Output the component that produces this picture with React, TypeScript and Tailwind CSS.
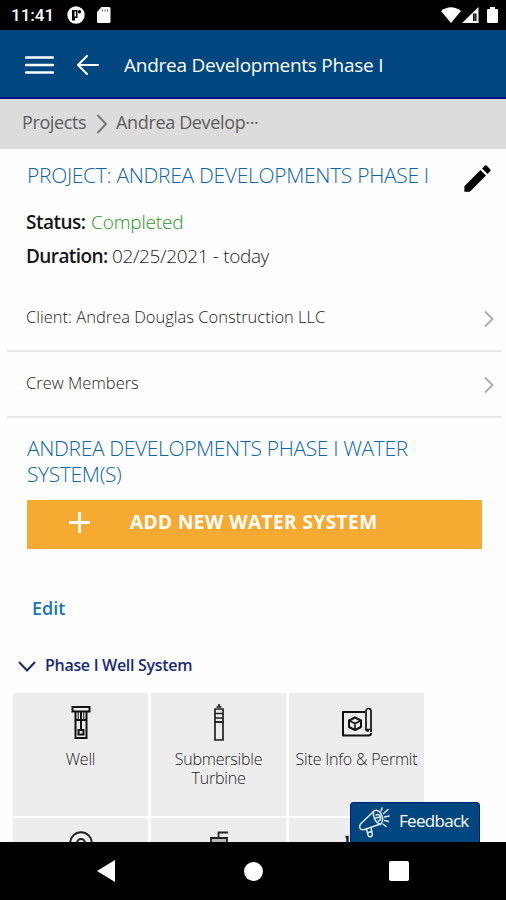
import React from 'react';
import { MdEdit } from 'react-icons/md';

const WellIcon = () => (
  <svg width="20" height="34" viewBox="0 0 20 34" fill="none" stroke="#111" strokeWidth="2">
    <path d="M1.5 2h17v4.5h-17z" />
    <path d="M4.5 6.5V33h11V6.5M10 6.5V25M4.5 15h11" />
    <path d="M7.5 25h5v4.5h-5z" />
    <path d="M7.200 7v8M12.800 7v8" strokeWidth="1" />
  </svg>
);

const TurbineIcon = () => (
  <svg width="12" height="38" viewBox="0 0 12 38" fill="none" stroke="#222" strokeWidth="1.7">
    <path d="M6 0v3M3.500 3h5M2 5h8v4.500H2z" />
    <path d="M2 9.500v4.500h8V9.500M2 14h8v4H2z" />
    <path d="M2 18h8v18H2z" />
  </svg>
);

const PermitIcon = () => (
  <svg width="32" height="30" viewBox="0 0 32 30" fill="none" stroke="#111" strokeWidth="2" strokeLinejoin="round">
    <path d="M24 5H2v23.5h25.500a2.700 2.700 0 0 0 2.700-2.700" />
    <path d="M25 22.500V4a2.500 2.500 0 0 1 5 0v21M25 22.500h5M25 22.500c0 1.500 2 1.500 3 1.500" strokeWidth="1.700" />
    <path d="M14 10.500l6 3v6.500l-6 3-6-3v-6.500z" strokeWidth="2" />
    <path d="M8 13.500l6 3 6-3M14 16.500v6" strokeWidth="1.500" />
  </svg>
);

const ReelIcon = () => (
  <svg width="24" height="24" viewBox="0 0 24 24" fill="none" stroke="#222" strokeWidth="2">
    <circle cx="12" cy="12" r="10.800" />
    <circle cx="12" cy="12" r="4" />
  </svg>
);

const TankIcon = () => (
  <svg width="20" height="26" viewBox="0 0 20 26" fill="none" stroke="#222" strokeWidth="1.8">
    <path d="M19 1.500H9.500V7" />
    <path d="M2 7h16v18H2z" fill="#bbb" />
  </svg>
);

const PumpIcon = () => (
  <svg width="32" height="26" viewBox="0 0 32 26" fill="none" stroke="#222" strokeWidth="2.500">
    <path d="M6.500 5v20M4.500 6h3" />
  </svg>
);

const MegaphoneIcon = () => (
  <svg width="32" height="32" viewBox="0 0 32 32" fill="none" stroke="#dfe9f7" strokeWidth="1.500" strokeLinecap="round" strokeLinejoin="round">
    <path d="M2.500 17L14.500 5.500c2-3 5.500-3 8 .5 2.500 4 3 8.500 0 11l-16 5.500C2 24 .5 20 2.500 17z" />
    <path d="M8.500 22l1.500 6c.8 3 5 2 4.200-1L13 20.500M10 25.500l4-1" />
    <path d="M15.500 5c-1 4 1.500 10.500 7 12.500M18 8c2-1 4 0 4.500 2s-.5 3.500-2 4M17.500 11l4-1" />
    <path d="M23 4l1-3M25.500 6.500l4.500-4M26.500 10l4.500-1M26.500 13.500l4 1M25 17l3 2.500" />
  </svg>
);

const rows = ['Client: Andrea Douglas Construction LLC', 'Crew Members'];

const tiles = [
  { icon: <WellIcon />, label: 'Well', pad: 'pt-3' },
  { icon: <TurbineIcon />, label: 'Submersible Turbine', pad: 'pt-[11px]' },
  { icon: <PermitIcon />, label: 'Site Info & Permit', pad: 'pt-[14px]' },
  { icon: <ReelIcon />, label: '', pad: 'pt-[13px]' },
  { icon: <TankIcon />, label: '', pad: 'pt-[13px]' },
  { icon: <PumpIcon />, label: '', pad: 'pt-[13px]' }
];

const Chevron = () => (
  <svg width="10" height="18" viewBox="0 0 10 18" fill="none" stroke="#aaa" strokeWidth="1.800">
    <path d="M1 1.500L8.500 9 1 16.500" />
  </svg>
);

function StatusBar() {
  return (
    <div className="flex h-[30px] shrink-0 items-center bg-black pl-[11px] pr-2 text-white">
      <span className="w-[56px] pt-0.5 font-['Roboto'] text-[17px] font-medium">11:41</span>
      <svg width="18" height="18" viewBox="0 0 18 18">
        <circle cx="9" cy="9" r="8.700" fill="#fff" />
        <path d="M5 4h5.500v8H8v2.500H5z" fill="#000" />
        <path d="M7.500 5.500h1.500v5H7.500z" fill="#fff" />
        <circle cx="12.500" cy="5.800" r="1.700" fill="#000" />
      </svg>
      <svg className="ml-3" width="14" height="16" viewBox="0 0 14 16">
        <path d="M4.500 0H12a1.500 1.500 0 0 1 1.500 1.500v13A1.500 1.500 0 0 1 12 16H1.500A1.500 1.500 0 0 1 0 14.500V5z" fill="#fff" />
        <path d="M5.500 2.500v2M8 2.500v2M10.500 2.500v2" stroke="#555" />
      </svg>
      <svg className="ml-auto" width="20" height="16" viewBox="0 0 20 16">
        <path d="M0 4Q10-3.500 20 4L10 16z" fill="#fff" />
      </svg>
      <svg className="ml-px" width="17" height="16" viewBox="0 0 17 16">
        <path d="M16.500 0v16H0z" fill="#fff" />
        <path d="M11 6.500h3.500V14H11z" fill="#000" />
        <path d="M12.300 6.500h1V14h-1z" fill="#777" />
      </svg>
      <svg className="ml-2" width="11" height="16" viewBox="0 0 11 16">
        <path d="M3 0h5v2h2a1 1 0 0 1 1 1v12a1 1 0 0 1-1 1H1a1 1 0 0 1-1-1V3a1 1 0 0 1 1-1h2z" fill="#fff" />
      </svg>
    </div>
  );
}

function Header() {
  return (
    <header className="flex h-[69px] shrink-0 items-center border-b-2 border-[#04107c] bg-[#00467f] pl-[25px] pt-0.5 text-white">
      <svg width="29" height="20" viewBox="0 0 29 20" stroke="#fff" strokeWidth="2.400" strokeLinecap="round">
        <path d="M1 2.500h27M1 10h27M1 17.500h27" />
      </svg>
      <svg className="ml-[22px]" width="24" height="20" viewBox="0 0 24 20" fill="none" stroke="#fff" strokeWidth="2" strokeLinecap="round" strokeLinejoin="round">
        <path d="M11 1L2 10l9 9M2 10h20" />
      </svg>
      <h1 className="ml-6 mt-0.5 whitespace-nowrap text-[19px] tracking-[-0.25px]">Andrea Developments Phase I</h1>
    </header>
  );
}

export default function App() {
  return (
    <div className="flex h-[900px] w-[506px] flex-col overflow-hidden bg-white font-['Open_Sans',sans-serif]">
      <StatusBar />
      <Header />

      <nav className="flex h-[50px] shrink-0 items-center bg-[#dcdcdc] pl-[22px] text-[18px] text-[#5c5c5c]">
        <span className="mb-1 w-[74px] whitespace-nowrap tracking-[-0.4px]">Projects</span>
        <svg width="12" height="20" viewBox="0 0 12 20" fill="none" stroke="#777" strokeWidth="2">
          <path d="M1.500 1L10 10l-8.500 9" />
        </svg>
        <span className="mb-1 ml-2 whitespace-nowrap tracking-[-0.35px]">Andrea Develop···</span>
      </nav>

      <main className="relative h-[693px] shrink-0 overflow-hidden bg-[#fefefe]">
        <div className="flex h-[54px] items-center pl-[27px] pr-[11px]">
          <h2 className="whitespace-nowrap text-[21px] font-light tracking-[-0.3px] text-[#0b66b0]">PROJECT: ANDREA DEVELOPMENTS PHASE I</h2>
          <MdEdit className="ml-auto mt-1 size-[35px] text-black" />
        </div>
        <div className="flex h-[36px] items-center pt-0.5 pl-[26px] text-[19px] text-[#222]">
          <b className="w-[65px] whitespace-nowrap font-semibold tracking-[-0.5px] text-[#161616]">Status:</b>
          <span className="font-light tracking-[-0.15px] text-[#259725]">Completed</span>
        </div>
        <div className="flex h-[34px] items-center pt-px pl-[26px] text-[19px] text-[#222]">
          <b className="w-[86px] whitespace-nowrap font-semibold tracking-[-0.6px] text-[#161616]">Duration:</b>
          <span className="font-light tracking-[-0.35px]">02/25/2021 - today</span>
        </div>

        <div className="ml-[7px] mr-[5px] mt-3">
          {rows.map((row) => (
            <div key={row} className="flex h-[66.500px] items-center border-b-2 border-[#e8e8e8] pl-[19px] pr-[7px] text-[16.500px] font-light text-[#222]">
              <span>{row}</span>
              <span className="ml-auto mt-[3px]"><Chevron /></span>
            </div>
          ))}
        </div>

        <h2 className="mt-[17px] pl-[27px] text-[21px] leading-[26px] font-light tracking-[-0.35px] text-[#0b66b0]">
          ANDREA DEVELOPMENTS PHASE I WATER<br />SYSTEM(S)
        </h2>
        <button className="ml-[27px] mt-[13px] flex h-[49px] w-[455px] items-center bg-[#f7aa32] pl-[42px] text-white">
          <svg className="mb-1" width="21" height="21" viewBox="0 0 21 21" stroke="#fff" strokeWidth="2.800">
            <path d="M10.500 0v21M0 10.500h21" />
          </svg>
          <span className="mb-1 ml-10 whitespace-nowrap text-[19px] font-bold tracking-[0.450px]">ADD NEW WATER SYSTEM</span>
        </button>
        <div className="mt-[45px] h-[28px] pl-[32px] text-[18px] leading-[28px] font-semibold text-[#1874bb]">Edit</div>

        <div className="mt-[29px] flex h-[28px] items-center pl-[18px] text-[16px] font-semibold text-[#1a2a7c]">
          <svg className="mt-[3px]" width="18" height="11" viewBox="0 0 18 11" fill="none" stroke="#1a2a6c" strokeWidth="2">
            <path d="M1 1l8 8.500L17 1" />
          </svg>
          <span className="ml-[9px] whitespace-nowrap tracking-[-0.3px]">Phase I Well System</span>
        </div>

        <div className="ml-[13px] mt-[14px] grid w-[411px] grid-cols-3 gap-x-[3px] gap-y-0.5">
          {tiles.map((tile, i) => (
            <div key={i} className={`relative h-[123px] bg-[#ededed] ${tile.pad} flex flex-col items-center`}>
              {tile.icon}
              <p className="absolute top-[57px] w-[132px] px-0.5 text-center text-[16px] leading-[19px] font-light tracking-[-0.2px] text-[#222]">{tile.label}</p>
            </div>
          ))}
        </div>

        <button className="absolute bottom-0 left-[350px] flex h-10 w-[130px] items-center rounded-t-[4px] border border-b-0 border-[#001c80] bg-[#00467f] pl-[7px] text-white">
          <MegaphoneIcon />
          <span className="mb-1 ml-[9px] text-[17px] font-medium tracking-[-0.7px]">Feedback</span>
        </button>
      </main>

      <footer className="relative flex h-[58px] shrink-0 items-center bg-black">
        <svg className="ml-[97px]" width="18" height="22" viewBox="0 0 18 22" fill="#fff">
          <path d="M18 0v22L0 11z" />
        </svg>
        <div className="ml-[129px] size-[19px] rounded-full bg-white" />
        <div className="ml-[126px] size-5 rounded-[2px] bg-white" />
      </footer>
    </div>
  );
}
